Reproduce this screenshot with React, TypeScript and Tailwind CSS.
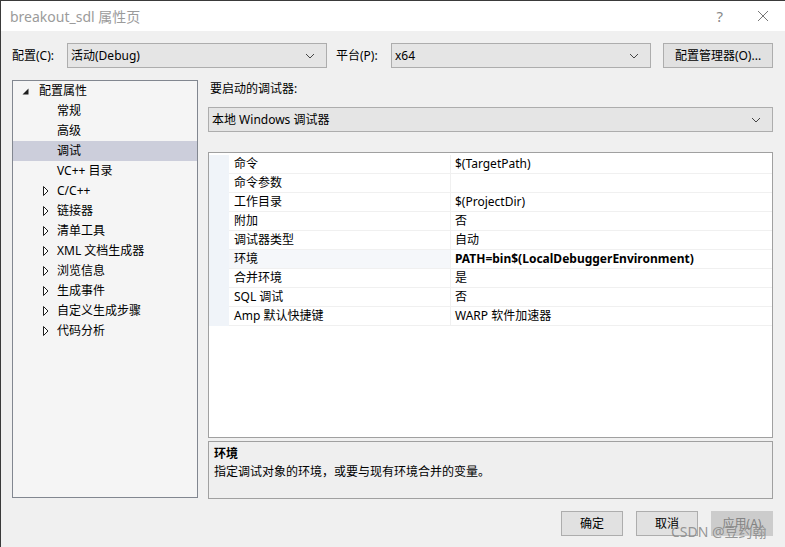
import React from 'react';

const font = { fontFamily: '"Segoe UI", "Noto Sans", "Noto Sans CJK SC", sans-serif' };

const Chevron = () => (
  <svg width="10" height="6" viewBox="0 0 10 6" className="shrink-0">
    <path d="M1 1 L5 5 L9 1" fill="none" stroke="#444" strokeWidth="1" />
  </svg>
);

const Select: React.FC<{ value: string; className: string }> = ({ value, className }) => (
  <div className={`flex items-center justify-between border border-[#adadad] bg-[#e5e5e5] pl-[3px] pr-[11px] ${className}`}>
    <span className="text-[12px] text-black">{value}</span>
    <Chevron />
  </div>
);

const Btn: React.FC<{ label: string; disabled?: boolean; className?: string }> = ({ label, disabled, className = '' }) => (
  <div
    className={`flex h-[25px] items-center justify-center border text-[12px] ${
      disabled ? 'border-[#cccccc] bg-[#cccccc] text-[#838383]' : 'border-[#adadad] bg-[#e1e1e1] text-black'
    } ${className}`}
  >
    {label}
  </div>
);

const FilledTri = () => (
  <svg width="7" height="7" viewBox="0 0 7 7">
    <path d="M6.5 0.5 L6.5 6.5 L0.5 6.5 Z" fill="#1e1e1e" />
  </svg>
);

const OpenTri = () => (
  <svg width="6" height="10" viewBox="0 0 6 10">
    <path d="M0.5 0.5 L5 5 L0.5 9.5 Z" fill="white" stroke="#1e1e1e" strokeWidth="1" />
  </svg>
);

const tree: { label: string; expand?: boolean; selected?: boolean }[] = [
  { label: '常规' },
  { label: '高级' },
  { label: '调试', selected: true },
  { label: 'VC++ 目录' },
  { label: 'C/C++', expand: true },
  { label: '链接器', expand: true },
  { label: '清单工具', expand: true },
  { label: 'XML 文档生成器', expand: true },
  { label: '浏览信息', expand: true },
  { label: '生成事件', expand: true },
  { label: '自定义生成步骤', expand: true },
  { label: '代码分析', expand: true },
];

const props: { name: string; value: string; bold?: boolean }[] = [
  { name: '命令', value: '$(TargetPath)' },
  { name: '命令参数', value: '' },
  { name: '工作目录', value: '$(ProjectDir)' },
  { name: '附加', value: '否' },
  { name: '调试器类型', value: '自动' },
  { name: '环境', value: 'PATH=bin$(LocalDebuggerEnvironment)', bold: true },
  { name: '合并环境', value: '是' },
  { name: 'SQL 调试', value: '否' },
  { name: 'Amp 默认快捷键', value: 'WARP 软件加速器' },
];

export default function App() {
  return (
    <div style={font} className="relative flex h-[547px] w-[785px] flex-col overflow-hidden border-l border-t border-[#3a3a3a] bg-[#f0f0f0] text-black">
      {/* title bar */}
      <div className="flex h-[30px] shrink-0 items-center justify-between bg-white pl-[9px] pr-[16px]">
        <span className="text-[14px] text-[#9b9b9b]">breakout_sdl 属性页</span>
        <div className="flex items-center gap-[34px] text-[#888]">
          <span className="text-[15px]">?</span>
          <svg width="12" height="12" viewBox="0 0 12 12">
            <path d="M1 1 L11 11 M11 1 L1 11" stroke="#777" strokeWidth="1" />
          </svg>
        </div>
      </div>

      {/* config row */}
      <div className="mt-[12px] flex h-[25px] items-center pl-[11px] text-[12px]">
        <span className="w-[55px]">配置(C):</span>
        <Select value="活动(Debug)" className="h-[25px] w-[260px]" />
        <span className="ml-[9px] w-[55px]">平台(P):</span>
        <Select value="x64" className="h-[25px] w-[260px]" />
        <Btn label="配置管理器(O)..." className="ml-[12px] w-[110px]" />
      </div>

      <div className="mt-[12px] flex pl-[11px]">
        {/* tree */}
        <div className="h-[418px] w-[186px] border border-[#828790] bg-[#f5f5f5] text-[12px]">
          <div className="flex h-[20px] items-center">
            <span className="ml-[9px] flex w-[17px] items-center"><FilledTri /></span>
            <span>配置属性</span>
          </div>
          {tree.map((t) => (
            <div key={t.label} className={`flex h-[20px] items-center ${t.selected ? 'bg-[#cccedb]' : ''}`}>
              <span className="ml-[30px] flex w-[14px] items-center">{t.expand && <OpenTri />}</span>
              <span>{t.label}</span>
            </div>
          ))}
        </div>

        {/* right side */}
        <div className="ml-[10px] flex w-[565px] flex-col">
          <span className="ml-[2px] h-[17px] text-[12px] leading-[17px]">要启动的调试器:</span>
          <Select value="本地 Windows 调试器" className="mt-[10px] h-[25px] w-[565px]" />

          <div className="mt-[20px] h-[286px] border border-[#a0a0a0] bg-white pt-[2px] text-[12px]">
            {props.map((p) => (
              <div key={p.name} className="flex h-[19px]">
                <div className="w-[20px] bg-[#f0f4f9]" />
                <div className={`flex w-[222px] items-center border-b border-r border-[#f0f0f0] pl-[5px] ${p.bold ? 'bg-[#f5f7fa]' : ''}`}>
                  {p.name}
                </div>
                <div className={`flex flex-1 items-center border-b border-[#f0f0f0] pl-[4px] ${p.bold ? 'font-bold' : ''}`}>
                  {p.value}
                </div>
              </div>
            ))}
          </div>

          <div className="mt-[3px] h-[58px] border border-[#a0a0a0] bg-[#efefef] px-[5px] pt-[3px] text-[12px]">
            <div className="font-bold leading-[18px]">环境</div>
            <div className="leading-[18px]">指定调试对象的环境，或要与现有环境合并的变量。</div>
          </div>
        </div>
      </div>

      {/* buttons */}
      <div className="mt-[12px] flex justify-end gap-[13px] pr-[12px]">
        <Btn label="确定" className="w-[62px]" />
        <Btn label="取消" className="w-[62px]" />
        <Btn label="应用(A)" disabled className="w-[62px]" />
      </div>

      <span className="absolute left-[670px] top-[520px] text-[14px] text-[#8a8a8a]/90">CSDN @豆约翰</span>
    </div>
  );
}
